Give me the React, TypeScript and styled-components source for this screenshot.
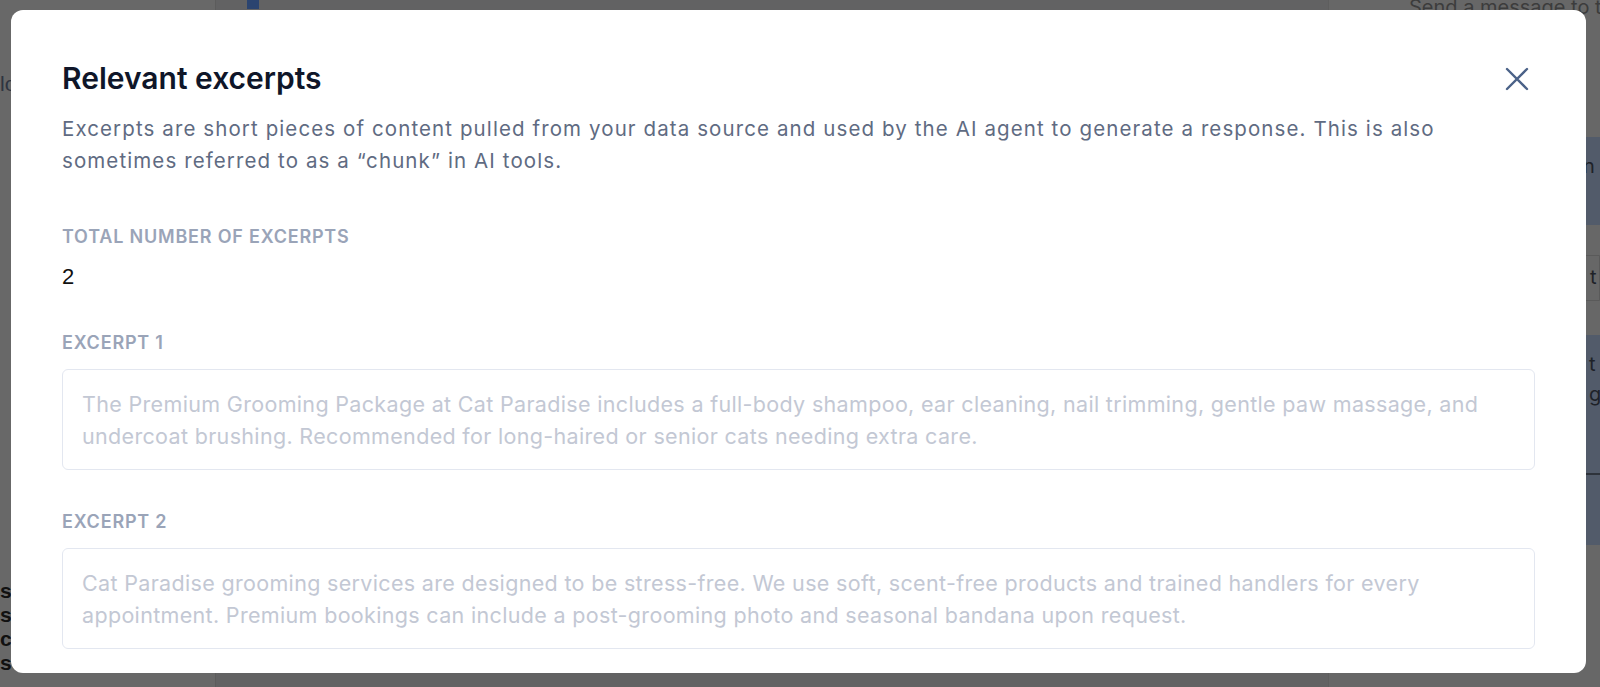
import React from "react";
import styled, { createGlobalStyle } from "styled-components";

const GlobalStyle = createGlobalStyle`
  * {
    box-sizing: border-box;
  }
  body {
    margin: 0;
    background: #666666;
    font-family: Inter, "Noto Sans", sans-serif;
    overflow: hidden;
  }
`;

const Page = styled.div`
  position: relative;
  width: 100%;
  height: 687px;
  overflow: hidden;
  background: #666666;
`;

/* dimmed app behind the dialog */
const Shell = styled.div`
  display: grid;
  grid-template-columns: 216px 1fr 272px;
  height: 100%;
`;

const Sidebar = styled.aside`
  display: flex;
  flex-direction: column;
  justify-content: space-between;
  padding: 72px 0 12px;
  border-right: 1px solid #5c5c5c;
  background: #686868;
`;

const SideText = styled.div<{ $strong?: boolean }>`
  font-family: "Liberation Sans", Arial, sans-serif;
  font-size: 21px;
  line-height: 24px;
  font-weight: ${(p) => (p.$strong ? 700 : 400)};
  color: ${(p) => (p.$strong ? "#111111" : "#2e3440")};
  white-space: nowrap;
`;

const Main = styled.main`
  background: #626263;
  padding-left: 31px;
`;

const ActiveTab = styled.div`
  width: 12px;
  height: 9px;
  background: #2b4470;
`;

const RightPanel = styled.aside`
  display: flex;
  flex-direction: column;
  padding: 0 0 0 80px;
  border-left: 1px solid #5e5e5e;
  background: #676767;
`;

const Hint = styled.div`
  height: 145px;
  margin-top: -8px;
  font-size: 20px;
  line-height: 30px;
  color: #3c3c3c;
  white-space: nowrap;
`;

const SlateBlock = styled.div<{ $h: number; $indent: number }>`
  height: ${(p) => p.$h}px;
  padding: 14px 0 0 ${(p) => p.$indent}px;
  background: #525b6a;
  font-size: 20px;
  line-height: 30px;
  color: #1e2228;
  white-space: nowrap;
`;

const Chip = styled.div`
  height: 46px;
  margin: 30px 0 34px;
  padding: 6px 0 0 180px;
  border: 1px solid #5a5a5a;
  border-radius: 23px 0 0 23px;
  font-size: 20px;
  line-height: 30px;
  color: #1e2228;
  white-space: nowrap;
`;

const SlateDivider = styled.div`
  height: 2px;
  margin: 64px 0 0 -180px;
  background: #2e333b;
`;

/* dialog */
const Overlay = styled.div`
  position: absolute;
  inset: 0;
  display: flex;
  padding: 10px 14px 14px 11px;
`;

const Modal = styled.section`
  flex: 1;
  background: #ffffff;
  border-radius: 12px;
  padding: 49px 51px 0;
  overflow: hidden;
`;

const Header = styled.header`
  display: flex;
  justify-content: space-between;
  align-items: center;
`;

const Title = styled.h2`
  margin: 0;
  font-size: 30px;
  line-height: 36px;
  font-weight: 600;
  color: #0f1629;
`;

const CloseButton = styled.button`
  display: flex;
  align-items: center;
  justify-content: center;
  width: 36px;
  height: 36px;
  margin-top: 2px;
  padding: 0;
  border: 0;
  background: transparent;
  color: #4b6288;
  cursor: pointer;
`;

const Description = styled.p`
  margin: 16px 0 0;
  max-width: 1400px;
  font-size: 20.5px;
  line-height: 32px;
  letter-spacing: 1.1px;
  color: #5f6b82;
`;

const Sections = styled.div`
  display: flex;
  flex-direction: column;
  gap: 40px;
  margin-top: 48px;
`;

const Field = styled.div`
  display: flex;
  flex-direction: column;
  gap: 14px;
`;

const Label = styled.div`
  font-size: 18px;
  line-height: 24px;
  font-weight: 600;
  letter-spacing: 0.8px;
  text-transform: uppercase;
  color: #9aa4b8;
`;

const Value = styled.div`
  font-family: "Liberation Sans", Arial, sans-serif;
  font-size: 22px;
  line-height: 28px;
  color: #111111;
`;

const ExcerptBox = styled.div`
  padding: 18px 19px 17px;
  border: 1px solid #e3e7f0;
  border-radius: 6px;
  font-size: 21.5px;
  line-height: 32px;
  letter-spacing: 0.33px;
  color: #c3c8d4;
`;

const CloseIcon = () => (
  <svg width="24" height="24" viewBox="0 0 24 24" fill="none">
    <path
      d="M2 2L22 22M22 2L2 22"
      stroke="currentColor"
      strokeWidth="2.4"
      strokeLinecap="round"
    />
  </svg>
);

const excerpts = [
  "The Premium Grooming Package at Cat Paradise includes a full-body shampoo, ear cleaning, nail trimming, gentle paw massage, and undercoat brushing. Recommended for long-haired or senior cats needing extra care.",
  "Cat Paradise grooming services are designed to be stress-free. We use soft, scent-free products and trained handlers for every appointment. Premium bookings can include a post-grooming photo and seasonal bandana upon request.",
];

const App: React.FC = () => {
  return (
    <Page>
      <GlobalStyle />
      <Shell>
        <Sidebar>
          <SideText>lo</SideText>
          <div>
            <SideText $strong>sp</SideText>
            <SideText $strong>s,</SideText>
            <SideText $strong>c</SideText>
            <SideText $strong>se</SideText>
          </div>
        </Sidebar>
        <Main>
          <ActiveTab />
        </Main>
        <RightPanel>
          <Hint>
            Send a message to test
            <br />
            your agent
          </Hint>
          <SlateBlock $h={88} $indent={162}>
            on
          </SlateBlock>
          <Chip>t</Chip>
          <SlateBlock $h={210} $indent={180}>
            t
            <br />
            g
            <SlateDivider />
          </SlateBlock>
        </RightPanel>
      </Shell>

      <Overlay>
        <Modal role="dialog" aria-label="Relevant excerpts">
          <Header>
            <Title>Relevant excerpts</Title>
            <CloseButton type="button" aria-label="Close">
              <CloseIcon />
            </CloseButton>
          </Header>
          <Description>
            Excerpts are short pieces of content pulled from your data source
            and used by the AI agent to generate a response. This is also
            sometimes referred to as a “chunk” in AI tools.
          </Description>
          <Sections>
            <Field>
              <Label>Total number of excerpts</Label>
              <Value>{excerpts.length}</Value>
            </Field>
            {excerpts.map((text, index) => (
              <Field key={index}>
                <Label>Excerpt {index + 1}</Label>
                <ExcerptBox>{text}</ExcerptBox>
              </Field>
            ))}
          </Sections>
        </Modal>
      </Overlay>
    </Page>
  );
};

export default App;
